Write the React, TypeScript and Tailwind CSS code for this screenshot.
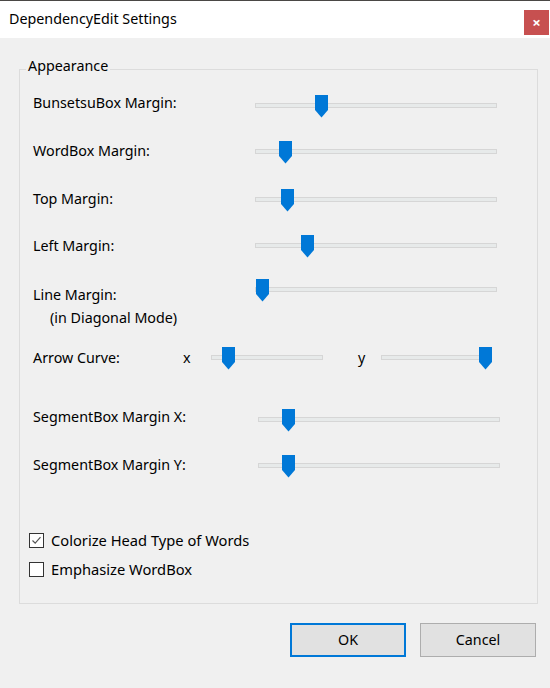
import React from "react";

type SliderProps = {
  width: number;
  thumb: number; // thumb left offset inside track, px
};

function Slider({ width, thumb }: SliderProps) {
  return (
    <div className="relative h-[23px] shrink-0" style={{ width }}>
      {/* track */}
      <div className="absolute left-0 right-0 top-[8px] h-[5px] border border-[#d6d6d6] bg-[#e7eaea]" />
      {/* thumb */}
      <svg
        className="absolute top-0"
        style={{ left: thumb }}
        width="13"
        height="23"
        viewBox="0 0 13 23"
      >
        <polygon points="0,0 13,0 13,15 6.5,22.5 0,15" fill="#0078d7" />
      </svg>
    </div>
  );
}

function CheckBox({ checked, label }: { checked: boolean; label: string }) {
  return (
    <div className="flex items-center gap-[7px] h-[20px]">
      <div className="w-[15px] h-[15px] border border-[#333333] bg-white flex items-center justify-center">
        {checked && (
          <svg width="11" height="11" viewBox="0 0 11 11">
            <path d="M1.5 5.5 L4.2 8.2 L9.5 2.2" fill="none" stroke="#555555" strokeWidth="1.2" />
          </svg>
        )}
      </div>
      <span className="text-[14.7px]">{label}</span>
    </div>
  );
}

export default function App() {
  return (
    <div
      className="w-[550px] h-[688px] bg-[#f0f0f0] text-[14.3px] text-black flex flex-col overflow-hidden"
      style={{ fontFamily: '"Noto Sans", "Open Sans", sans-serif' }}
    >
      {/* Title bar */}
      <div className="h-[38px] bg-white border-t border-[#4a4845] flex items-center justify-between shrink-0">
        <span className="pl-[9px] text-[14.3px] leading-none">DependencyEdit Settings</span>
        <div className="mr-[1px] w-[25px] h-[25px] bg-[#c75050] text-white flex items-center justify-center text-[15px] font-bold leading-none mt-[5px]">
          ×
        </div>
      </div>

      {/* Body */}
      <div className="flex-1 px-[19px] pt-[31px]">
        {/* Group box */}
        <div className="relative w-[519px] h-[535px] border border-[#dcdcdc] pl-[13px] pt-[25px]">
          <span className="absolute -top-[14px] left-[6px] px-[2px] bg-[#f0f0f0] leading-[20px]">
            Appearance
          </span>

          <div className="flex h-[46px]">
            <span className="w-[222px] mt-[-2px] leading-[20px]">BunsetsuBox Margin:</span>
            <Slider width={242} thumb={60} />
          </div>
          <div className="flex h-[48px]">
            <span className="w-[222px] leading-[20px]">WordBox Margin:</span>
            <Slider width={242} thumb={24} />
          </div>
          <div className="flex h-[46px]">
            <span className="w-[222px] leading-[20px]">Top Margin:</span>
            <Slider width={242} thumb={26} />
          </div>
          <div className="flex h-[44px]">
            <span className="w-[222px] mt-[1px] leading-[20px]">Left Margin:</span>
            <Slider width={242} thumb={46} />
          </div>
          <div className="flex h-[68px]">
            <div className="w-[222px] mt-[4px] leading-[23px] flex flex-col">
              <span>Line Margin:</span>
              <span className="pl-[17px]">(in Diagonal Mode)</span>
            </div>
            <Slider width={242} thumb={1} />
          </div>
          <div className="flex h-[62px]">
            <span className="w-[150px] mt-[1px] leading-[20px]">Arrow Curve:</span>
            <span className="w-[28px] mt-[1px] leading-[20px]">x</span>
            <Slider width={112} thumb={11} />
            <span className="w-[58px] mt-[1px] pl-[35px] leading-[20px]">y</span>
            <Slider width={111} thumb={98} />
          </div>
          <div className="flex h-[46px]">
            <span className="w-[225px] mt-[-2px] leading-[20px]">SegmentBox Margin X:</span>
            <Slider width={242} thumb={24} />
          </div>
          <div className="flex h-[75px]">
            <span className="w-[225px] leading-[20px]">SegmentBox Margin Y:</span>
            <Slider width={242} thumb={24} />
          </div>

          <div className="-ml-[4px] flex flex-col gap-[9px]">
            <CheckBox checked label="Colorize Head Type of Words" />
            <CheckBox checked={false} label="Emphasize WordBox" />
          </div>
        </div>

        {/* Buttons */}
        <div className="flex justify-end gap-[14px] mt-[19px] -mr-[5px]">
          <button className="w-[116px] h-[34px] bg-[#e1e1e1] border-2 border-[#0078d7]">OK</button>
          <button className="w-[116px] h-[34px] bg-[#e1e1e1] border border-[#adadad]">Cancel</button>
        </div>
      </div>
    </div>
  );
}
